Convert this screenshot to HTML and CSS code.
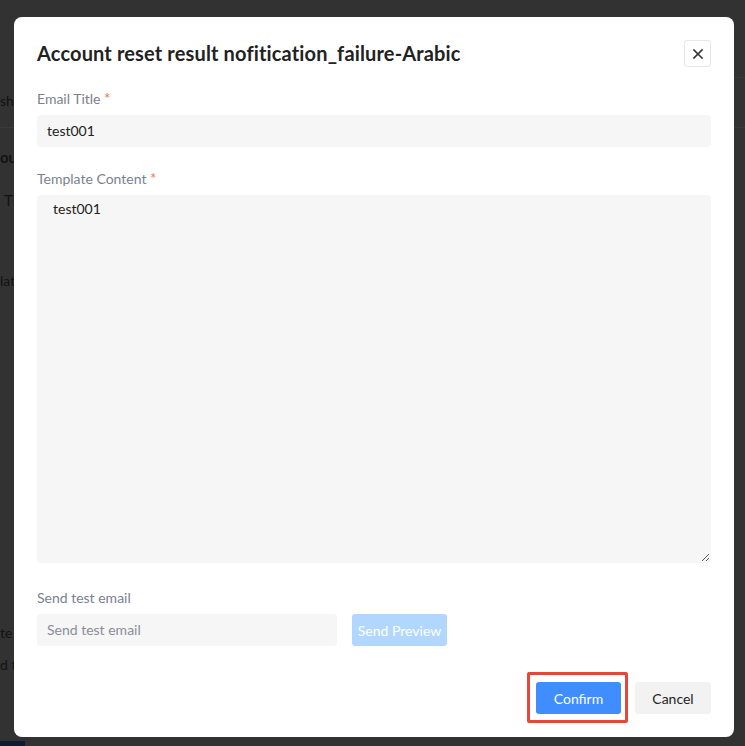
FILE: index.html
```html
<!DOCTYPE html>
<html lang="en">
<head>
<meta charset="utf-8">
<title>Account reset result notification</title>
<link rel="stylesheet" href="styles.css">
</head>
<body>
  <div class="page-bg">
    <div class="bg-rule bg-rule-top"></div>
    <div class="bg-row bg-row-1">sh-</div>
    <div class="bg-rule bg-rule-mid"></div>
    <div class="bg-row bg-row-2">ou</div>
    <div class="bg-row bg-row-3">Ti</div>
    <div class="bg-row bg-row-4">lat</div>
    <div class="bg-row bg-row-5">te</div>
    <div class="bg-row bg-row-6">d t</div>
    <div class="bg-chip"></div>
  </div>

  <div class="modal" role="dialog">
    <div class="modal-header">
      <h1 class="modal-title">Account reset result nofitication_failure-Arabic</h1>
      <button class="close-btn" aria-label="Close">
        <svg width="10" height="10" viewBox="0 0 10 10"><path d="M1 1 L9 9 M9 1 L1 9" stroke="#333" stroke-width="1.6" fill="none" stroke-linecap="square"/></svg>
      </button>
    </div>

    <div class="field">
      <div class="label">Email Title <span class="req">*</span></div>
      <div class="input">test001</div>
    </div>

    <div class="field">
      <div class="label">Template Content <span class="req">*</span></div>
      <div class="textarea">
        test001
        <svg class="resize" width="9" height="9" viewBox="0 0 9 9"><path d="M1 8 L8 1 M5 8 L8 5" stroke="#555" stroke-width="1" fill="none"/></svg>
      </div>
    </div>

    <div class="field field-test">
      <div class="label">Send test email</div>
      <div class="test-row">
        <div class="input input-test placeholder">Send test email</div>
        <button class="btn btn-preview">Send Preview</button>
      </div>
    </div>

    <div class="modal-footer">
      <div class="highlight">
        <button class="btn btn-primary">Confirm</button>
      </div>
      <button class="btn btn-cancel">Cancel</button>
    </div>
  </div>
</body>
</html>
```

FILE: styles.css
```css
* { box-sizing: border-box; }

html, body {
  margin: 0;
  padding: 0;
  width: 745px;
  height: 746px;
  overflow: hidden;
  background: #323232;
  font-family: "Lato", "Noto Sans", sans-serif;
}

/* dimmed page behind the overlay */
.page-bg {
  display: flex;
  flex-direction: column;
  color: #121212;
  font-size: 14px;
  height: 746px;
}
.bg-rule { height: 1px; background: #3a3a3a; }
.bg-rule-top { margin-top: 77px; margin-left: 734px; }
.bg-rule-mid { margin-top: 16px; }
.bg-row { line-height: 20px; white-space: nowrap; }
.bg-row-1 { margin-top: 13px; }
.bg-row-2 { margin-top: 19px; font-weight: 700; font-size: 15px; }
.bg-row-3 { margin-top: 23px; margin-left: 4px; font-size: 15px; }
.bg-row-4 { margin-top: 61px; }
.bg-row-5 { margin-top: 332px; }
.bg-row-6 { margin-top: 12px; }
.bg-chip { margin-top: auto; width: 25px; height: 5px; background: #0f1a33; }

/* modal */
.modal {
  position: fixed;
  left: 14px;
  top: 17px;
  width: 720px;
  height: 720px;
  background: #fff;
  border-radius: 8px;
  padding: 23px 23px 0 23px;
  display: flex;
  flex-direction: column;
}

.modal-header {
  display: flex;
  align-items: center;
  justify-content: space-between;
  height: 27px;
}
.modal-title {
  margin: 0;
  font-size: 20px;
  font-weight: 700;
  color: #222;
  line-height: 27px;
  letter-spacing: 0.15px;
}
.close-btn {
  width: 27px;
  height: 27px;
  padding: 0;
  border: 1px solid #e6e6e6;
  border-radius: 3px;
  background: #fff;
  display: flex;
  align-items: center;
  justify-content: center;
}

.field { margin-top: 22px; }
.label {
  height: 20px;
  font-size: 14px;
  line-height: 20px;
  color: #7b7f92;
  margin-bottom: 6px;
}
.req { color: #f5734f; font-size: 15px; line-height: 1; }

.input {
  height: 32px;
  background: #f6f6f6;
  border-radius: 4px;
  padding: 0 10px;
  font-size: 14px;
  line-height: 32px;
  color: #222;
}
.textarea {
  position: relative;
  height: 368px;
  background: #f6f6f6;
  border-radius: 4px;
  padding: 4px 16px;
  font-size: 14px;
  line-height: 20px;
  color: #222;
}
.resize { position: absolute; right: 1px; bottom: 1px; }

.field-test { margin-top: 25px; }
.test-row { display: flex; align-items: center; gap: 15px; }
.input-test { width: 300px; }
.placeholder { color: #8a8d99; }

.btn {
  height: 32px;
  border: none;
  border-radius: 3px;
  font-family: inherit;
  font-size: 14px;
  padding: 0;
}
.btn-preview {
  width: 95px;
  background: #b2d7ff;
  color: #fff;
}

.modal-footer {
  margin-top: 36px;
  display: flex;
  justify-content: flex-end;
  gap: 14px;
}
.highlight { position: relative; display: flex; }
.highlight::after {
  content: "";
  position: absolute;
  left: -9px;
  top: -10px;
  right: -7px;
  bottom: -9px;
  border: 3px solid #e7463c;
  border-radius: 2px;
}
.btn-primary {
  width: 85px;
  background: #3f8dff;
  color: #fff;
}
.btn-cancel {
  width: 76px;
  background: #f2f2f2;
  color: #222;
}
```
